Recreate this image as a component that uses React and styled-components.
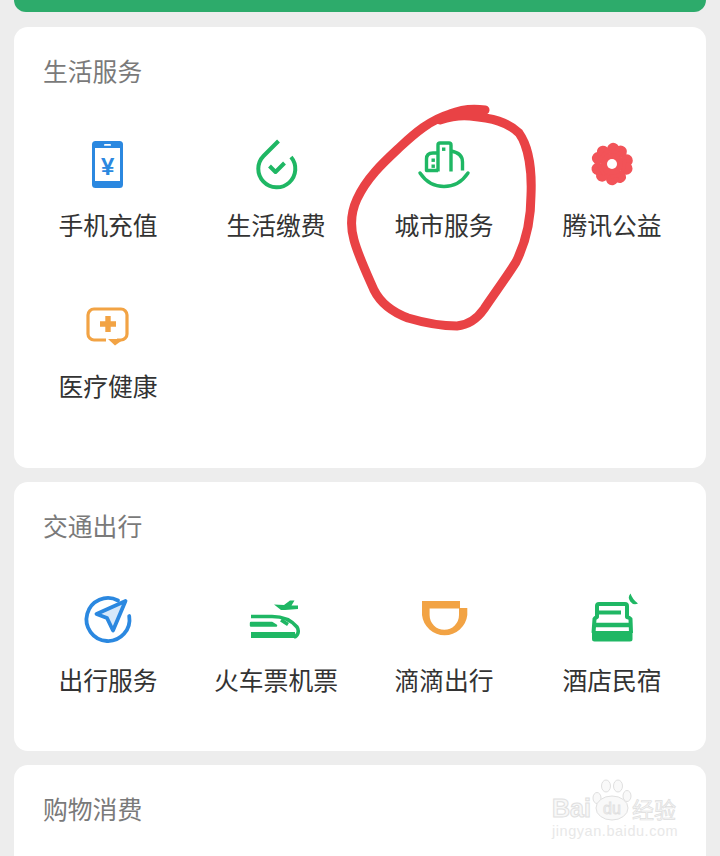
import React from "react";
import styled, { createGlobalStyle } from "styled-components";

const GREEN = "#1fb764";
const BLUE = "#2b88e0";
const ORANGE = "#f2a344";
const RED = "#f25358";

const GlobalStyle = createGlobalStyle`
  html, body {
    margin: 0;
    padding: 0;
    background: #ededed;
    overflow: hidden;
  }
  body {
    font-family: "Noto Sans CJK SC", "Noto Sans", sans-serif;
  }
`;

const PhoneIcon = () => (
  <svg width="56" height="56" viewBox="0 0 56 56">
    <rect x="12" y="5" width="31" height="47" rx="3.5" fill={BLUE} />
    <rect x="15" y="12" width="25" height="33" fill="#fff" />
    <rect x="24" y="8" width="7" height="1.8" rx="0.9" fill="#fff" />
    <text x="27.7" y="39" textAnchor="middle" fontSize="24" fontWeight="700" fontFamily="Liberation Sans, sans-serif" fill={BLUE}>¥</text>
  </svg>
);

const BillIcon = () => (
  <svg width="56" height="56" viewBox="0 0 56 56" fill="none" stroke={GREEN} strokeWidth="4" strokeLinejoin="round">
    <path d="M30.5 5 L15.5 20 A18.5 18.5 0 1 0 43 21" />
    <path d="M21.5 30 L27.5 36 L36.5 27" />
  </svg>
);

const CityIcon = () => (
  <svg width="56" height="56" viewBox="0 0 56 56" fill="none" stroke={GREEN} strokeWidth="3.4" strokeLinejoin="round">
    <path d="M4 37 C10 46 18 50.5 28 50.5 S46 46 52 37" strokeWidth="3.4" strokeLinecap="round" />
    <path d="M22 35.5 V9 Q22 7 24 7 H33 Q35 7 35 9 V35.5" />
    <path d="M22 17 H17 Q10.5 17 10.5 23 V34.5 H22" />
    <path d="M35 15 Q46.5 17 46.5 26 V34.5" />
    <rect x="26" y="11.5" width="3.4" height="3.4" fill={GREEN} stroke="none" />
    <rect x="15.5" y="22.5" width="3.4" height="3.4" fill={GREEN} stroke="none" />
    <rect x="15.5" y="28.5" width="3.4" height="3.4" fill={GREEN} stroke="none" />
  </svg>
);

const FlowerIcon = () => (
  <svg width="56" height="56" viewBox="0 0 56 56">
    {[-70, 2, 74, 146, 218].map((deg) => (
      <g key={deg} transform={`rotate(${deg} 28 28)`}>
        <circle cx="42.5" cy="24" r="6.2" fill={RED} />
        <circle cx="42.5" cy="32" r="6.2" fill={RED} />
        <rect x="30" y="23" width="12" height="10" fill={RED} />
      </g>
    ))}
    <circle cx="28" cy="28" r="11" fill={RED} />
    <circle cx="28" cy="28" r="5" fill="#fff" />
  </svg>
);

const MedicalIcon = () => (
  <svg width="56" height="56" viewBox="0 0 56 56" fill="none" stroke={ORANGE} strokeWidth="3.2">
    <path d="M26 43 H14 A6 6 0 0 1 8 37 V18 A6 6 0 0 1 14 12 H41 A6 6 0 0 1 47 18 V37 A6 6 0 0 1 41 43 H37" />
    <path d="M28 42 H44 L35 48.5 Z" fill={ORANGE} stroke="none" />
    <path d="M28 19 V35 M20 27 H36" strokeWidth="5.4" />
  </svg>
);

const NavIcon = () => (
  <svg width="56" height="56" viewBox="0 0 56 56" fill="none" stroke={BLUE} strokeWidth="3.8" strokeLinejoin="round">
    <path d="M38 9.5 A21.5 21.5 0 1 0 49.2 25" strokeLinecap="round" />
    <path d="M45.5 10 L16.5 23 L27 27 L33 39.5 Z" fill="#d6e8fa" />
  </svg>
);

const TrainIcon = () => (
  <svg width="56" height="56" viewBox="0 0 56 56" fill="none" stroke={GREEN}>
    <path d="M3 25.5 H24 C35 25.5 44 30 49 36 C51.5 40 50 45 46 46" strokeWidth="3.6" />
    <path d="M3 32 H24 L28 34.5 H3 Z" fill={GREEN} strokeWidth="2.4" strokeLinejoin="round" />
    <rect x="3" y="41" width="44" height="6" fill={GREEN} stroke="none" />
    <path d="M33 29 L40 33.5" strokeWidth="3.4" />
    <path d="M26 13.5 L36 14 L42 9.5 H46.5 L43.5 14.5 H50 L50 18 L37 19 L33 19 Z" fill={GREEN} stroke="none" />
  </svg>
);

const DidiIcon = () => (
  <svg width="56" height="56" viewBox="0 0 56 56">
    <path
      fillRule="evenodd"
      fill={ORANGE}
      d="M6 10 H44 V17 H51.3 V24 A22.8 22.8 0 0 1 6 24 Z M13.6 17.5 H43 V24 A14.7 14.7 0 0 1 13.6 24 Z"
    />
  </svg>
);

const BedIcon = () => (
  <svg width="56" height="56" viewBox="0 0 56 56" fill="none" stroke={GREEN} strokeWidth="4" strokeLinejoin="round">
    <path d="M9.5 42 L10.5 28 Q11 27 13 26 V15 Q13 13 15 13 H41 Q43 13 43 15 V26 Q46 27 46.5 28 L47 42" />
    <path d="M14 21.5 H37" />
    <path d="M11 34 H46" strokeWidth="4.5" />
    <path d="M8 40 H48.5 V48 Q48.5 50.5 46 50.5 H10.5 Q8 50.5 8 48 Z" fill={GREEN} stroke="none" />
    <path d="M46.5 2.5 A6.4 6.4 0 0 0 54 12.5 A20 20 0 0 1 46.5 2.5 Z" fill={GREEN} stroke="none" />
  </svg>
);

const sections = [
  {
    title: "生活服务",
    bottom: 66,
    items: [
      { label: "手机充值", icon: <PhoneIcon /> },
      { label: "生活缴费", icon: <BillIcon /> },
      { label: "城市服务", icon: <CityIcon /> },
      { label: "腾讯公益", icon: <FlowerIcon /> },
      { label: "医疗健康", icon: <MedicalIcon /> },
    ],
  },
  {
    title: "交通出行",
    bottom: 55,
    items: [
      { label: "出行服务", icon: <NavIcon /> },
      { label: "火车票机票", icon: <TrainIcon /> },
      { label: "滴滴出行", icon: <DidiIcon /> },
      { label: "酒店民宿", icon: <BedIcon /> },
    ],
  },
  { title: "购物消费", bottom: 80, items: [] },
];

const Page = styled.div`
  position: relative;
  width: 720px;
  height: 856px;
  padding: 0 14px;
  box-sizing: border-box;
  overflow: hidden;
  display: flex;
  flex-direction: column;
  gap: 14px;
`;

const TopBar = styled.div`
  height: 12px;
  margin-bottom: 1px;
  flex: none;
  background: #2dab6b;
  border-radius: 0 0 14px 14px;
`;

const Card = styled.section`
  flex: none;
  background: #fff;
  border-radius: 14px;
  padding: 22px 10px ${(p) => p.$bottom}px;
`;

const Title = styled.h2`
  margin: 0 0 34px 19px;
  font-size: 24.8px;
  line-height: 42px;
  font-weight: 400;
  color: #7a7a7a;
`;

const Grid = styled.div`
  display: grid;
  grid-template-columns: repeat(4, 168px);
  row-gap: 45px;
`;

const Item = styled.div`
  display: flex;
  flex-direction: column;
  align-items: center;
  padding: 11px 0 2px;
`;

const IconBox = styled.div`
  width: 56px;
  height: 56px;
  margin-bottom: 17px;
  svg {
    display: block;
  }
`;

const Label = styled.span`
  font-size: 24.8px;
  line-height: 30px;
  color: #333;
  white-space: nowrap;
`;

const RingLayer = styled.svg`
  position: absolute;
  left: 0;
  top: 0;
  pointer-events: none;
`;

const Watermark = styled.div`
  position: absolute;
  left: 552px;
  top: 778px;
  width: 130px;
  color: #fff;
`;

const MarkRow = styled.div`
  display: flex;
  align-items: flex-end;
  height: 44px;
`;

const MarkText = styled.span`
  font-family: "Liberation Sans", sans-serif;
  font-weight: 700;
  font-size: 25px;
  line-height: 28px;
  color: #f8f8f8;
  -webkit-text-stroke: 1px #e0e0e0;
`;

const Paw = styled.svg`
  flex: none;
  margin: 0 0 0 1px;
`;

const MarkCn = styled.span`
  font-size: 22px;
  line-height: 28px;
  color: #f6f6f6;
  -webkit-text-stroke: 0.7px #dedede;
  white-space: nowrap;
`;

const MarkUrl = styled.div`
  font-family: "Liberation Sans", sans-serif;
  font-size: 14.5px;
  line-height: 18px;
  letter-spacing: 0.55px;
  color: #e8e8e8;
  white-space: nowrap;
`;

export default function App() {
  return (
    <Page>
      <GlobalStyle />
      <TopBar />
      {sections.map((s) => (
        <Card key={s.title} $bottom={s.bottom}>
          <Title>{s.title}</Title>
          <Grid>
            {s.items.map((it) => (
              <Item key={it.label}>
                <IconBox>{it.icon}</IconBox>
                <Label>{it.label}</Label>
              </Item>
            ))}
          </Grid>
        </Card>
      ))}
      <RingLayer width="720" height="856" viewBox="0 0 720 856" fill="none">
        <path
          d="M485 110 C472 108 462 109 450 114 C430 120 415 133 400 147 C385 161 367 177 357 199 C351 212 350 226 354 240 C358 255 366 272 374 290 C381 304 392 312 408 318 C425 323 442 326 457 326 C468 325 477 319 484 309 C494 294 506 278 516 262 C526 242 531 222 531 195 C532 172 529 147 519 133 C508 122 492 118 470 116 C460 115 452 116 440 120"
          stroke="#e94245"
          strokeWidth="9"
          strokeLinecap="round"
        />
      </RingLayer>
      <Watermark>
        <MarkRow>
          <MarkText>Bai</MarkText>
          <Paw width="40" height="44" viewBox="0 0 40 44" fill="#f9f9f9" stroke="#e0e0e0" strokeWidth="1">
            <ellipse cx="5" cy="20" rx="4" ry="5.5" />
            <ellipse cx="14" cy="8" rx="4.5" ry="6" />
            <ellipse cx="26" cy="8" rx="4.5" ry="6" />
            <ellipse cx="35" cy="18" rx="4" ry="5.5" />
            <ellipse cx="20" cy="30" rx="16" ry="12" />
            <text x="20" y="36" textAnchor="middle" fontSize="16" fontFamily="Liberation Sans, sans-serif" fill="#f4f4f4" strokeWidth="0.8">du</text>
          </Paw>
          <MarkCn>经验</MarkCn>
        </MarkRow>
        <MarkUrl>jingyan.baidu.com</MarkUrl>
      </Watermark>
    </Page>
  );
}
